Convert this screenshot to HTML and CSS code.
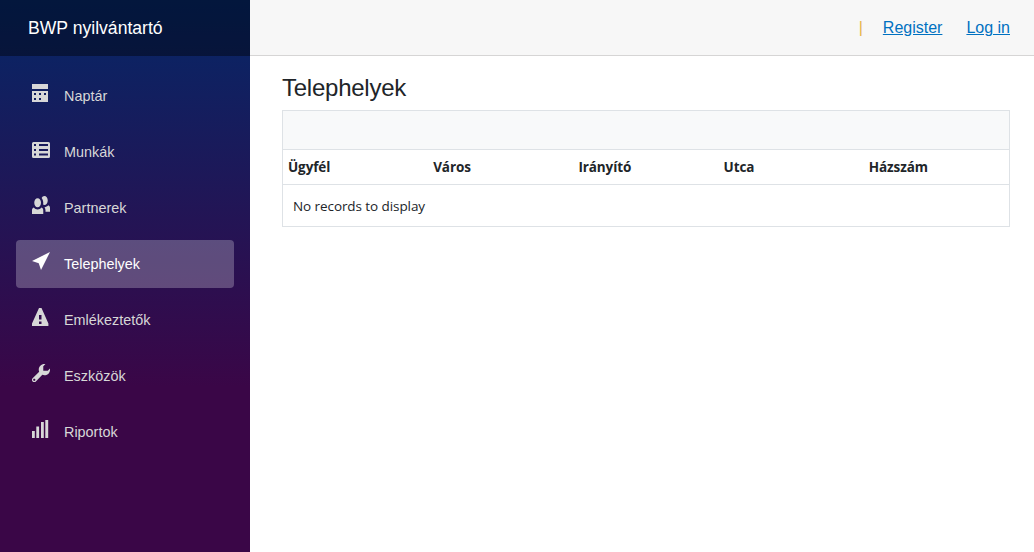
FILE: index.html
```
<!DOCTYPE html>
<html lang="hu">
<head>
<meta charset="utf-8">
<title>BWP nyilvántartó</title>
<link rel="stylesheet" href="styles.css">
</head>
<body>
<div class="page">
  <aside class="sidebar">
    <div class="brand">BWP nyilvántartó</div>
    <nav class="nav">
      <a class="nav-link"><svg class="icon" viewBox="0 0 18 18"><path fill-rule="evenodd" d="M0 0h16v5h-16zM0 7h16v11h-16zM2 9v2h2v-2zM7 9v2h2v-2zM12 9v2h2v-2zM2 14v2h2v-2zM7 14v2h2v-2z"/></svg>Naptár</a>
      <a class="nav-link"><svg class="icon" viewBox="0 0 18 18"><path fill-rule="evenodd" d="M1.500 2h15q1.500 0 1.500 1.500v13q0 1.500-1.500 1.500h-15q-1.500 0-1.500-1.500v-13q0-1.500 1.500-1.500zM2 4v2h2v-2zM7 4v2h9v-2zM2 9v2h2v-2zM7 9v2h9v-2zM2 13.500v2h2v-2zM7 13.500v2h9v-2z"/></svg>Munkák</a>
      <a class="nav-link"><svg class="icon" viewBox="0 0 8 8"><path d="M5.500 0c-.51 0-.95.35-1.220.88.45.54.72 1.280.72 2.130 0 .29-.03.55-.09.81.19.11.38.19.59.19.83 0 1.500-.9 1.500-2s-.67-2-1.500-2zm-3 1c-.83 0-1.500.9-1.500 2s.67 2 1.500 2 1.500-.9 1.500-2-.67-2-1.500-2zm4.750 3.160c-.43.51-1.020.82-1.690.84.27.38.44.84.44 1.340v.66h2v-1.660c0-.52-.31-.97-.75-1.190zm-6.500 1c-.44.22-.75.67-.75 1.190v1.660h5v-1.660c0-.52-.31-.97-.75-1.190-.45.53-1.060.84-1.750.84s-1.300-.32-1.750-.84z"/></svg>Partnerek</a>
      <a class="nav-link active"><svg class="icon" viewBox="0 0 8 8"><path d="M8 0l-8 4 3 1 1 3 4-8z"/></svg>Telephelyek</a>
      <a class="nav-link"><svg class="icon" viewBox="0 0 18 18"><path fill-rule="evenodd" d="M7 0h2.500l6.900 15.500v2.500h-16.400v-2.500zM7 7v4.500h2.500v-4.500zM7 13.500v2.500h2.500v-2.500z"/></svg>Emlékeztetők</a>
      <a class="nav-link"><svg class="icon" viewBox="0 0 8 8"><path d="M5.500 0c-1.380 0-2.500 1.120-2.500 2.500 0 .32.08.62.19.91l-2.910 2.880c-.39.39-.39 1.050 0 1.440.2.2.46.28.72.28.26 0 .52-.09.72-.28l2.880-2.910c.28.11.58.19.91.19 1.380 0 2.500-1.120 2.500-2.500 0-.16 0-.32-.03-.47l-.97.97h-2v-2l.97-.97c-.15-.03-.31-.03-.47-.03zm-4.500 6.500c.28 0 .5.22.5.5s-.22.5-.5.5-.5-.22-.5-.5.22-.5.5-.5z"/></svg>Eszközök</a>
      <a class="nav-link"><svg class="icon" viewBox="0 0 18 18"><path d="M0 11h2.800v7h-2.800zM4.300 6.500h2.800v11.500h-2.800zM9 2h2.800v16h-2.800zM13.300 0h2.900v18h-2.900z"/></svg>Riportok</a>
    </nav>
  </aside>
  <main class="main">
    <header class="top-row">
      <span class="divider">|</span>
      <a class="top-link" href="#">Register</a>
      <a class="top-link" href="#">Log in</a>
    </header>
    <section class="content">
      <h1 class="title">Telephelyek</h1>
      <div class="grid">
        <div class="toolbar"></div>
        <div class="grid-head">
          <span>Ügyfél</span><span>Város</span><span>Irányító</span><span>Utca</span><span>Házszám</span>
        </div>
        <div class="grid-empty">No records to display</div>
      </div>
    </section>
  </main>
</div>
</body>
</html>
```

FILE: styles.css
```
* { box-sizing: border-box; }
body {
  margin: 0;
  font: 16px/24px "Liberation Sans", Arial, sans-serif;
  color: #212529;
  background: #fff;
}
.page { display: flex; height: 100vh; overflow: hidden; }
.sidebar {
  width: 250px;
  flex: none;
  background: linear-gradient(180deg, rgb(5, 39, 103) 0%, #3a0647 70%);
}
.brand {
  height: 56px;
  padding-left: 28px;
  background: rgba(0, 0, 0, .4);
  color: #fff;
  font-size: 17.6px;
  line-height: 56px;
}
.nav { display: flex; flex-direction: column; gap: 8px; padding: 16px 16px 0; }
.nav-link {
  display: flex;
  height: 48px;
  padding-left: 16px;
  border-radius: 4px;
  color: #d7d7d7;
  font-size: 14.4px;
  line-height: 48px;
}
.nav-link.active { background: rgba(255, 255, 255, .25); color: #fff; }
.icon {
  width: 18px;
  height: 18px;
  margin: 12px 14px 0 0;
  fill: currentColor;
}
.main { flex: 1; min-width: 0; }
.top-row {
  display: flex;
  align-items: center;
  justify-content: flex-end;
  height: 56px;
  padding-right: 24px;
  background: #f7f7f7;
  border-bottom: 1px solid #d6d5d5;
}
.divider { margin-right: -4px; color: #e6b547; }
.top-link { margin-left: 24px; color: #0071c1; text-decoration: underline; }
.content { padding: 17px 24px 0 32px; }
.title { margin: 0 0 8px; font-size: 24px; font-weight: 400; line-height: 29px; letter-spacing: -.25px; }
.grid {
  border: 1px solid #dee2e6;
  font-family: "Open Sans", "Noto Sans", sans-serif;
}
.toolbar { height: 39px; background: #f8f9fa; border-bottom: 1px solid #dee2e6; }
.grid-head {
  display: grid;
  grid-template-columns: repeat(5, 1fr);
  height: 35px;
  border-bottom: 1px solid #dee2e6;
  font-size: 13.5px;
  font-weight: 700;
  letter-spacing: -.1px;
  line-height: 35px;
}
.grid-head span { padding-left: 5px; }
.grid-empty { height: 41px; padding-left: 10px; font-size: 13.5px; line-height: 43px; letter-spacing: -.08px; }
```
